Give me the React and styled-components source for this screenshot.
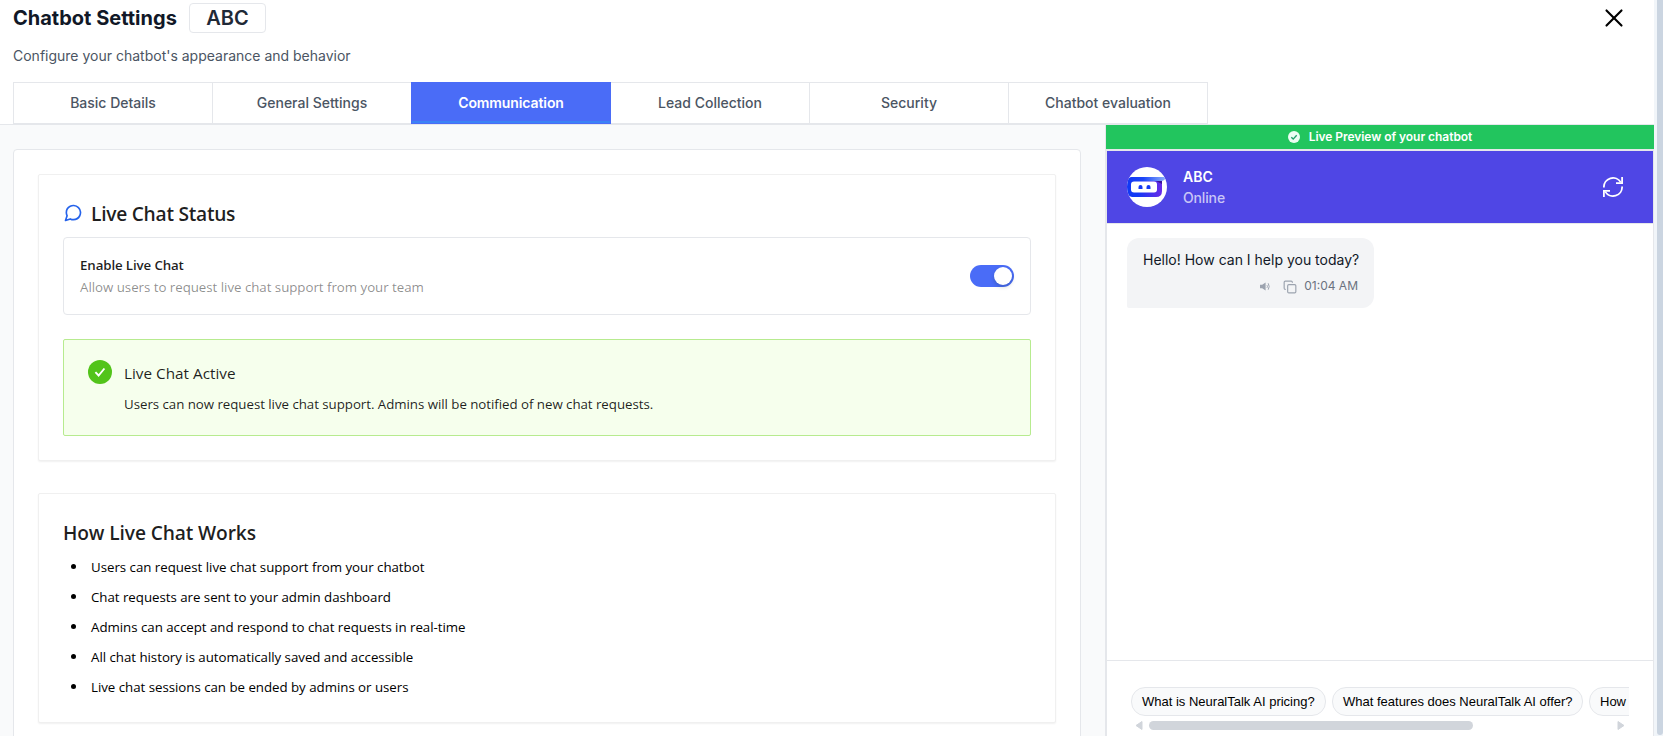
import React, {useState} from "react";
import styled, {createGlobalStyle} from "styled-components";
import {Copy, X} from "lucide-react";
import {FiMessageCircle} from "react-icons/fi";

const inter = `Inter, "Liberation Sans", sans-serif`;
const segoe = `"Segoe UI", "Open Sans", "Noto Sans", sans-serif`;

const GlobalStyle = createGlobalStyle`
  * {
    box-sizing: border-box;
  }
  body {
    margin: 0;
    overflow: hidden;
    background: #ffffff;
    font-family: ${inter};
  }
`;

const Text = styled.span`
  display: block;
  white-space: nowrap;
  letter-spacing: ${({$spacing}) => $spacing || 0}px;
`;

const Window = styled.div`
  display: flex;
  width: 1663px;
  height: 736px;
  overflow: hidden;
`;

const Page = styled.div`
  display: flex;
  flex-direction: column;
  width: 1654px;
`;

const PageScroll = styled.div`
  width: 9px;
  padding-left: 3px;
  background: #f1f5f9;
`;

const PageThumb = styled.div`
  height: 735px;
  background: #cbd5e1;
  border-radius: 0 0 3px 3px;
`;

const Header = styled.header`
  flex: none;
  height: 125px;
  padding: 3px 29px 0 13px;
  border-bottom: 1px solid #e5e7eb;
`;

const TitleRow = styled.div`
  display: flex;
  align-items: center;
  height: 30px;
`;

const Title = styled.h1`
  width: 176px;
  margin: 0;
  color: #111827;
  font-size: 20px;
  font-weight: 700;
  line-height: 28px;
`;

const NameBadge = styled.div`
  display: flex;
  align-items: center;
  justify-content: center;
  width: 77px;
  height: 30px;
  border: 1px solid #e5e7eb;
  border-radius: 4px;
  color: #1f2937;
  font-size: 20px;
  font-weight: 600;
`;

const CloseButton = styled.button`
  display: flex;
  margin-left: auto;
  margin-right: -4px;
  padding: 0;
  border: 0;
  background: none;
  color: #000000;
`;

const Subtitle = styled.p`
  margin: 12px 0 15px;
  color: #4b5563;
  font-size: 14px;
  line-height: 22px;
`;

const Tabs = styled.nav`
  display: flex;
  height: 42px;
`;

const Tab = styled.button`
  display: flex;
  align-items: center;
  justify-content: center;
  width: 200px;
  height: 42px;
  margin-right: -1px;
  padding: 0 0 2px;
  position: relative;
  z-index: ${({$active}) => ($active ? 1 : 0)};
  border: 1px solid ${({$active}) => ($active ? "#4a6cf7" : "#e5e7eb")};
  background: ${({$active}) => ($active ? "#4a6cf7" : "#ffffff")};
  box-shadow: ${({$active}) => ($active ? "inset 0 -2px 0 #3b82f6" : "none")};
  color: ${({$active}) => ($active ? "#ffffff" : "#4b5563")};
  font-family: ${inter};
  font-size: 14px;
  font-weight: ${({$active}) => ($active ? 600 : 500)};
  letter-spacing: ${({$active}) => ($active ? "-0.1px" : "0")};
`;

const Body = styled.div`
  display: flex;
  flex: 1;
  min-height: 0;
`;

const Content = styled.main`
  width: 1105px;
  padding: 24px 24px 0 13px;
  background: #f9fafb;
  overflow: hidden;
`;

const Panel = styled.div`
  display: flex;
  flex-direction: column;
  gap: 32px;
  height: 640px;
  padding: 24px;
  border: 1px solid #e5e7eb;
  border-radius: 4px;
  background: #ffffff;
`;

const Card = styled.section`
  flex: none;
  height: ${({$height}) => $height}px;
  padding: 24px;
  border: 1px solid #f0f0f0;
  border-radius: 2px;
  background: #ffffff;
  box-shadow: 0 1px 2px rgba(0, 0, 0, 0.06);
  color: rgba(0, 0, 0, 0.88);
  font-family: ${segoe};
`;

const CardTitle = styled.h2`
  display: flex;
  align-items: center;
  gap: 8px;
  height: 28px;
  margin: 0 0 10px;
  font-size: 19.2px;
  font-weight: 600;
`;

const SettingRow = styled.div`
  display: flex;
  align-items: center;
  justify-content: space-between;
  height: 78px;
  padding: 0 16px;
  border: 1px solid #e5e7eb;
  border-radius: 4px;
`;

const SettingName = styled.div`
  font-size: 13.3px;
  font-weight: 600;
  line-height: 22px;
`;

const SettingHint = styled.div`
  color: rgba(0, 0, 0, 0.45);
  font-size: 13.3px;
  line-height: 22px;
`;

const Switch = styled.button`
  display: flex;
  align-items: center;
  justify-content: ${({$on}) => ($on ? "flex-end" : "flex-start")};
  width: 44px;
  height: 22px;
  padding: 2px;
  border: 0;
  border-radius: 11px;
  background: ${({$on}) => ($on ? "#4a6cf7" : "#bfbfbf")};
`;

const Knob = styled.span`
  width: 18px;
  height: 18px;
  border-radius: 9px;
  background: #ffffff;
  box-shadow: 0 2px 4px rgba(0, 35, 11, 0.2);
`;

const Alert = styled.div`
  display: flex;
  gap: 12px;
  height: 97px;
  margin-top: 24px;
  padding: 20px 24px;
  border: 1px solid #b7eb8f;
  border-radius: 2px;
  background: #f6ffed;
`;

const AlertTitle = styled.div`
  font-size: 15.3px;
  line-height: 24px;
  margin: 1px 0 8px;
`;

const AlertText = styled.div`
  font-size: 13.3px;
  line-height: 22px;
`;

const List = styled.ul`
  margin: 0;
  padding: 0 0 0 8px;
  color: #000000;
  font-size: 13.3px;
  list-style: none;
`;

const ListItem = styled.li`
  display: flex;
  height: 30px;
  line-height: 22px;

  &::before {
    content: "";
    width: 5px;
    height: 5px;
    margin: 8px 15px 0 0;
    border-radius: 50%;
    background: #000000;
  }
`;

const Preview = styled.aside`
  display: flex;
  flex-direction: column;
  width: 549px;
  border-left: 1px solid #e5e7eb;
`;

const PreviewBar = styled.div`
  display: flex;
  align-items: center;
  justify-content: center;
  gap: 9px;
  height: 24px;
  padding-bottom: 1px;
  background: #22c55e;
  color: #ffffff;
  font-size: 12px;
  font-weight: 600;
`;

const Chat = styled.div`
  display: flex;
  flex: 1;
  flex-direction: column;
  border: 1px solid #e5e7eb;
  border-top-width: 2px;
  border-bottom: 0;
`;

const ChatHeader = styled.div`
  display: flex;
  align-items: center;
  height: 73px;
  padding: 0 30px 1px 20px;
  border-bottom: 1px solid #e5e7eb;
  background: #4f46e5;
  color: #ffffff;
`;

const BotInfo = styled.div`
  flex: 1;
  margin-left: 16px;
  font-size: 14px;
  line-height: 21px;
`;

const BotName = styled.div`
  font-weight: 600;
`;

const BotStatus = styled.div`
  color: rgba(255, 255, 255, 0.7);
  font-weight: 500;
`;

const Messages = styled.div`
  flex: 1;
  padding: 14px 20px;
`;

const Bubble = styled.div`
  width: 247px;
  height: 70px;
  padding: 11px 16px 0;
  border-radius: 12px 12px 12px 2px;
  background: #f3f4f6;
  color: #111827;
  font-size: 14px;
  line-height: 22px;
`;

const BubbleMeta = styled.div`
  display: flex;
  align-items: center;
  justify-content: flex-end;
  height: 18px;
  margin-top: 6px;
  color: #6b7280;
  font-size: 12px;

  svg {
    flex: none;
    color: #9ca3af;
    margin-top: 1px;
  }
`;

const Questions = styled.div`
  height: 76px;
  padding: 26px 24px 0;
  border-top: 1px solid #e5e7eb;
`;

const Chips = styled.div`
  display: flex;
  gap: 6px;
  width: 498px;
  overflow: hidden;
`;

const Chip = styled.button`
  flex: none;
  width: ${({$width}) => $width}px;
  height: 29px;
  padding: 0 10px;
  border: 1px solid #e5e7eb;
  border-radius: 14px;
  background: #f9fafb;
  color: #000000;
  font-family: "Liberation Sans", Arial, sans-serif;
  font-size: 13px;
  text-align: left;
`;

const ChipScroll = styled.div`
  display: flex;
  align-items: center;
  justify-content: space-between;
  width: 490px;
  height: 9px;
  margin: 5px 0 0 4px;
`;

const ChipTrack = styled.div`
  flex: 1;
  margin: 0 6px;
`;

const ChipThumb = styled.div`
  width: 324px;
  height: 9px;
  border-radius: 5px;
  background: #d1d5db;
`;

const ArrowLeft = () => (
    <svg width="8" height="9" viewBox="0 0 8 9">
        <path d="M7 .5v8L1 4.5z" fill="#d1d5db" stroke="#d1d5db" strokeLinejoin="round"/>
    </svg>
);

const ArrowRight = () => (
    <svg width="8" height="9" viewBox="0 0 8 9">
        <path d="M1 .5v8l6-4z" fill="#d1d5db" stroke="#d1d5db" strokeLinejoin="round"/>
    </svg>
);

const BotAvatar = () => (
    <svg width="40" height="40" viewBox="0 0 40 40">
        <defs>
            <linearGradient id="band" x1="0" x2="1" y1="0" y2="0">
                <stop offset="0" stopColor="#1238f5"/>
                <stop offset="0.4" stopColor="#1b45f8"/>
                <stop offset="1" stopColor="#8fb2fb"/>
            </linearGradient>
            <linearGradient id="face" x1="0" x2="1" y1="0" y2="0">
                <stop offset="0.3" stopColor="#1238f5"/>
                <stop offset="1" stopColor="#6a2be8"/>
            </linearGradient>
            <clipPath id="round">
                <circle cx="20" cy="20" r="20"/>
            </clipPath>
        </defs>
        <circle cx="20" cy="20" r="20" fill="#ffffff"/>
        <g clipPath="url(#round)">
            <path d="M6 10H30L35 14V24Q35 30 29 30H5Q0 29 0 23V17Q0 10 6 10Z" fill="url(#face)"/>
            <path d="M29 14h6v3z" fill="#3a1399"/>
            <path d="M5 10H39Q38 14 34 14H1Q2 10 5 10Z" fill="url(#band)"/>
            <rect x="4" y="14.5" width="26" height="11" rx="3" fill="#ffffff"/>
            <path d="M11.5 22v-2a2 2 0 0 1 4 0v2zM19.5 22v-2a2 2 0 0 1 4 0v2z" fill="#1238f5"/>
        </g>
    </svg>
);

const RefreshIcon = () => (
    <svg width="20" height="20" viewBox="0 0 20 20" fill="none" stroke="#ffffff" strokeWidth="1.8">
        <path d="M.9 10.5A9.1 9.1 0 0 1 17.8 5.4M19.1 9.5A9.1 9.1 0 0 1 2.2 14.6"/>
        <path d="M19.1 0v6.1H13M.9 20v-6.1H7"/>
    </svg>
);

const CheckBadge = () => (
    <svg width="12" height="12" viewBox="0 0 12 12">
        <circle cx="6" cy="6" r="6" fill="#ecfdf3"/>
        <path d="M3.3 6.2l1.9 1.9 3.5-3.8" fill="none" stroke="#22a06b" strokeWidth="1.4"/>
    </svg>
);

const SuccessIcon = () => (
    <svg width="24" height="24" viewBox="0 0 24 24">
        <circle cx="12" cy="12" r="12" fill="#52c41a"/>
        <path d="M7.4 12.1l3.2 3.4 5.8-7" fill="none" stroke="#ffffff" strokeWidth="1.9"/>
    </svg>
);

const SpeakerIcon = () => (
    <svg width="10" height="9" viewBox="0 0 10 9">
        <path d="M0 2.8h2.2L5.6.6v7.8L2.2 6.2H0z" fill="#9ca3af"/>
        <path d="M7 3.2q.9 1.3 0 2.6M8.2 1.3q2 3.2 0 6.4" fill="none" stroke="#9ca3af"/>
    </svg>
);

const SpeakerSlot = styled.span`
  display: flex;
  margin-right: 13px;
`;

const Time = styled(Text)`
  margin-left: 7px;
`;

const tabs = [
    "Basic Details",
    "General Settings",
    "Communication",
    "Lead Collection",
    "Security",
    "Chatbot evaluation",
];

const steps = [
    "Users can request live chat support from your chatbot",
    "Chat requests are sent to your admin dashboard",
    "Admins can accept and respond to chat requests in real-time",
    "All chat history is automatically saved and accessible",
    "Live chat sessions can be ended by admins or users",
];

const questions = [
    {text: "What is NeuralTalk AI pricing?", width: 195},
    {text: "What features does NeuralTalk AI offer?", width: 251},
    {text: "How", width: 120},
];

const App = () => {
    const [activeTab, setActiveTab] = useState("Communication");
    const [liveChat, setLiveChat] = useState(true);

    return (
        <Window>
            <GlobalStyle/>
            <Page>
                <Header>
                    <TitleRow>
                        <Title><Text>Chatbot Settings</Text></Title>
                        <NameBadge><Text>ABC</Text></NameBadge>
                        <CloseButton aria-label="Close"><X size={30} strokeWidth={1.7}/></CloseButton>
                    </TitleRow>
                    <Subtitle><Text>Configure your chatbot's appearance and behavior</Text></Subtitle>
                    <Tabs>
                        {tabs.map((name) => (
                            <Tab key={name} $active={name === activeTab} onClick={() => setActiveTab(name)}>
                                {name}
                            </Tab>
                        ))}
                    </Tabs>
                </Header>
                <Body>
                    <Content>
                        <Panel>
                            <Card $height={287}>
                                <CardTitle>
                                    <FiMessageCircle size={20} color="#2563eb"/>
                                    <Text $spacing={-0.27}>Live Chat Status</Text>
                                </CardTitle>
                                <SettingRow>
                                    <div>
                                        <SettingName><Text $spacing={-0.12}>Enable Live Chat</Text></SettingName>
                                        <SettingHint>
                                            <Text $spacing={-0.03}>Allow users to request live chat support from your team</Text>
                                        </SettingHint>
                                    </div>
                                    <Switch $on={liveChat} onClick={() => setLiveChat(!liveChat)}>
                                        <Knob/>
                                    </Switch>
                                </SettingRow>
                                <Alert>
                                    <SuccessIcon/>
                                    <div>
                                        <AlertTitle><Text>Live Chat Active</Text></AlertTitle>
                                        <AlertText>
                                            <Text $spacing={-0.04}>
                                                Users can now request live chat support. Admins will be notified of new chat requests.
                                            </Text>
                                        </AlertText>
                                    </div>
                                </Alert>
                            </Card>
                            <Card $height={230}>
                                <CardTitle><Text $spacing={-0.13}>How Live Chat Works</Text></CardTitle>
                                <List>
                                    {steps.map((step) => (
                                        <ListItem key={step}><Text $spacing={-0.03}>{step}</Text></ListItem>
                                    ))}
                                </List>
                            </Card>
                        </Panel>
                    </Content>
                    <Preview>
                        <PreviewBar>
                            <CheckBadge/>
                            <Text $spacing={-0.05}>Live Preview of your chatbot</Text>
                        </PreviewBar>
                        <Chat>
                            <ChatHeader>
                                <BotAvatar/>
                                <BotInfo>
                                    <BotName><Text>ABC</Text></BotName>
                                    <BotStatus><Text $spacing={-0.15}>Online</Text></BotStatus>
                                </BotInfo>
                                <RefreshIcon/>
                            </ChatHeader>
                            <Messages>
                                <Bubble>
                                    <Text>Hello! How can I help you today?</Text>
                                    <BubbleMeta>
                                        <SpeakerSlot><SpeakerIcon/></SpeakerSlot>
                                        <Copy size={14}/>
                                        <Time>01:04 AM</Time>
                                    </BubbleMeta>
                                </Bubble>
                            </Messages>
                            <Questions>
                                <Chips>
                                    {questions.map(({text, width}) => (
                                        <Chip key={text} $width={width}><Text>{text}</Text></Chip>
                                    ))}
                                </Chips>
                                <ChipScroll>
                                    <ArrowLeft/>
                                    <ChipTrack>
                                        <ChipThumb/>
                                    </ChipTrack>
                                    <ArrowRight/>
                                </ChipScroll>
                            </Questions>
                        </Chat>
                    </Preview>
                </Body>
            </Page>
            <PageScroll>
                <PageThumb/>
            </PageScroll>
        </Window>
    );
}

export default App;
